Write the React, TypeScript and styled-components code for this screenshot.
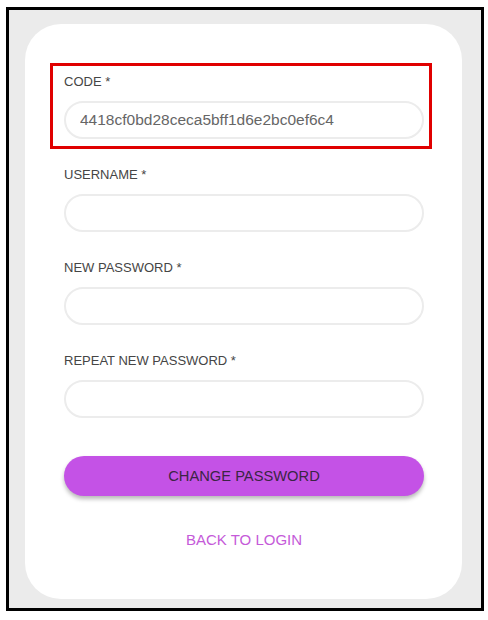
import React from 'react';
import styled, { createGlobalStyle } from 'styled-components';

const GlobalStyle = createGlobalStyle`
  html, body {
    margin: 0;
    padding: 0;
    background: #ffffff;
    font-family: "Liberation Sans", Arial, sans-serif;
  }
`;

const Frame = styled.div`
  box-sizing: border-box;
  margin: 7px 0 0 6px;
  width: 478px;
  height: 604px;
  border: 3px solid #000;
  background: #ebebeb;
  padding: 14px 19px 9px 16px;
`;

const Card = styled.form`
  box-sizing: border-box;
  height: 100%;
  background: #fff;
  border-radius: 36px;
  padding: 48px 0 0 39px;
  display: flex;
  flex-direction: column;
`;

const Fields = styled.div`
  display: flex;
  flex-direction: column;
  gap: 26px;
  width: 360px;
`;

const Field = styled.div<{ $highlighted?: boolean }>`
  position: relative;
  display: flex;
  flex-direction: column;
  gap: 11px;

  ${(p) =>
    p.$highlighted &&
    `
    &::before {
      content: '';
      position: absolute;
      left: -14px;
      top: -9px;
      width: 382px;
      height: 86px;
      box-sizing: border-box;
      border: 3px solid #e00000;
      pointer-events: none;
    }
  `}
`;

const Label = styled.label`
  padding-top: 2px;
  font-size: 13px;
  line-height: 16px;
  color: #454545;
`;

const Input = styled.input`
  box-sizing: border-box;
  height: 38px;
  width: 100%;
  border: 2px solid #ececec;
  border-radius: 19px;
  padding: 0 14px;
  font-family: "Liberation Sans", Arial, sans-serif;
  font-size: 15.5px;
  color: #666;
  background: #fff;
  outline: none;
`;

const Button = styled.button`
  margin-top: 38px;
  width: 360px;
  height: 40px;
  border: none;
  border-radius: 20px;
  background: #c452e6;
  box-shadow: 0 3px 4px rgba(0, 0, 0, 0.28);
  color: #3b2544;
  font-family: "Liberation Sans", Arial, sans-serif;
  font-size: 14.7px;
  cursor: pointer;
`;

const BackLink = styled.a`
  margin-top: 35px;
  width: 360px;
  text-align: center;
  font-size: 15px;
  line-height: 18px;
  color: #c55ad9;
  text-decoration: none;
  cursor: pointer;
`;

const fields = [
  { label: 'CODE *', value: '4418cf0bd28ceca5bff1d6e2bc0ef6c4', type: 'text', highlighted: true },
  { label: 'USERNAME *', value: '', type: 'text' },
  { label: 'NEW PASSWORD *', value: '', type: 'password' },
  { label: 'REPEAT NEW PASSWORD *', value: '', type: 'password' },
];

export default function App() {
  return (
    <>
      <GlobalStyle />
      <Frame>
        <Card onSubmit={(e) => e.preventDefault()}>
          <Fields>
            {fields.map((f) => (
              <Field key={f.label} $highlighted={f.highlighted}>
                <Label>{f.label}</Label>
                <Input type={f.type} defaultValue={f.value} />
              </Field>
            ))}
          </Fields>
          <Button type="submit">CHANGE PASSWORD</Button>
          <BackLink>BACK TO LOGIN</BackLink>
        </Card>
      </Frame>
    </>
  );
}
